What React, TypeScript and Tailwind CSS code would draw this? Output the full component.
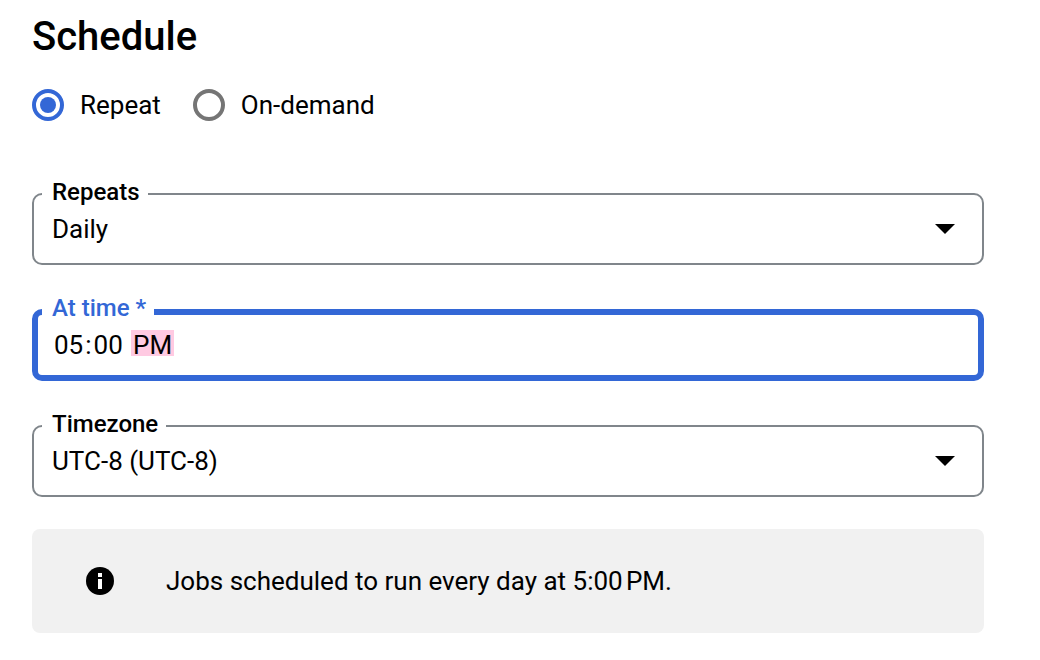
import { useState } from "react";
import type { ReactNode } from "react";

function RadioOption({
  label,
  value,
  checked,
  onSelect,
}: {
  label: string;
  value: string;
  checked: boolean;
  onSelect: (value: string) => void;
}) {
  return (
    <label className="flex cursor-pointer items-center gap-4">
      <input
        type="radio"
        name="mode"
        value={value}
        checked={checked}
        onChange={() => onSelect(value)}
        className="grid size-8 appearance-none place-items-center rounded-full border-4 border-[#757575] outline-none before:size-4 before:rounded-full checked:border-[#3367d6] checked:before:bg-[#3367d6]"
      />
      <span>{label}</span>
    </label>
  );
}

function SelectField({ id, label, children }: { id: string; label: string; children: ReactNode }) {
  return (
    <fieldset className="min-w-0 rounded-[10px] border-2 border-[#80868b] px-2">
      <legend className="pr-2 pb-1 pl-[10px] text-2xl leading-6 font-medium">
        <label htmlFor={id} className="block">
          {label}
        </label>
      </legend>
      <div className="grid items-center pb-[13px]">
        <select
          id={id}
          className="col-start-1 row-start-1 h-[42px] w-full appearance-none bg-transparent pr-14 pl-[10px] outline-none"
        >
          {children}
        </select>
        <svg
          viewBox="0 0 20 10"
          className="pointer-events-none col-start-1 row-start-1 mr-[19px] h-[10px] w-5 justify-self-end"
          aria-hidden="true"
        >
          <path d="M0 0h20L10 10z" />
        </svg>
      </div>
    </fieldset>
  );
}

export default function App() {
  const [mode, setMode] = useState("repeat");
  const [time, setTime] = useState("17:00");

  return (
    <form className="bg-white pt-[17px] pr-14 pb-7 pl-8 font-['Roboto',sans-serif] text-[26px] leading-8 text-black">
      <h1 className="text-[40px] leading-10 font-medium">Schedule</h1>

      <div className="mt-8 flex gap-8" role="radiogroup" aria-label="Schedule">
        <RadioOption label="Repeat" value="repeat" checked={mode === "repeat"} onSelect={setMode} />
        <RadioOption label="On-demand" value="demand" checked={mode === "demand"} onSelect={setMode} />
      </div>

      <div className="mt-[59px] flex flex-col gap-[31px]">
        <SelectField id="repeats" label="Repeats">
          <option>Daily</option>
          <option>Weekly</option>
          <option>Monthly</option>
        </SelectField>

        <fieldset className="min-w-0 rounded-[10px] border-[6px] border-[#3367d6] px-1">
          <legend className="pr-2 pb-2 pl-[10px] text-2xl leading-6 font-medium text-[#3367d6]">
            <label htmlFor="time" className="block">
              At time *
            </label>
          </legend>
          <div className="pb-[13px]">
            <input
              id="time"
              type="time"
              required
              value={time}
              onChange={(event) => setTime(event.target.value)}
              className="block h-[34px] w-full bg-transparent pl-[10px] outline-none [&::-webkit-calendar-picker-indicator]:hidden [&::-webkit-datetime-edit]:p-0 [&::-webkit-datetime-edit-hour-field]:px-[2px] [&::-webkit-datetime-edit-hour-field]:py-0 [&::-webkit-datetime-edit-minute-field]:px-[2px] [&::-webkit-datetime-edit-minute-field]:py-0 [&::-webkit-datetime-edit-ampm-field]:ml-[3px] [&::-webkit-datetime-edit-ampm-field]:bg-[linear-gradient(#ffcae2,#ffcae2)] [&::-webkit-datetime-edit-ampm-field]:bg-[length:100%_26px] [&::-webkit-datetime-edit-ampm-field]:bg-top [&::-webkit-datetime-edit-ampm-field]:bg-no-repeat [&::-webkit-datetime-edit-ampm-field]:px-[2px] [&::-webkit-datetime-edit-ampm-field]:py-0"
            />
          </div>
        </fieldset>

        <SelectField id="timezone" label="Timezone">
          <option>UTC-8 (UTC-8)</option>
          <option>UTC-7 (UTC-7)</option>
          <option>UTC+0 (UTC+0)</option>
        </SelectField>
      </div>

      <div className="mt-8 flex items-center gap-[52px] rounded-lg bg-[#f1f1f1] px-[54px] py-9">
        <svg viewBox="0 0 28 28" className="size-7 shrink-0" aria-hidden="true">
          <circle cx="14" cy="14" r="14" />
          <path d="M12 6h4v4h-4zM12 12h4v10h-4z" fill="#ffffff" />
        </svg>
        <p>Jobs scheduled to run every day at 5:00{"\u202f"}PM.</p>
      </div>
    </form>
  );
}
